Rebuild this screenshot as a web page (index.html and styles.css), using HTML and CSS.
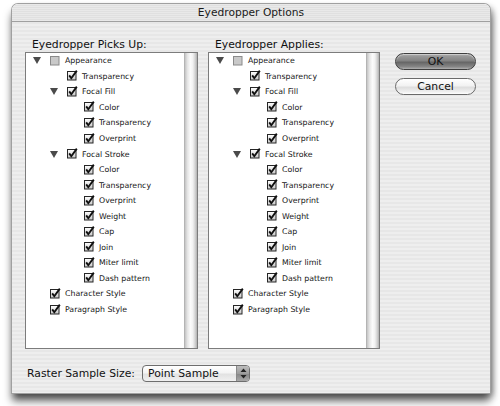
FILE: index.html
```html
<!DOCTYPE html>
<html>
<head>
<meta charset="utf-8">
<link rel="stylesheet" href="styles.css">
</head>
<body>
<svg width="0" height="0" class="defs">
  <defs>
    <linearGradient id="cbg" x1="0" y1="0" x2="0" y2="1">
      <stop offset="0" stop-color="#ffffff"/>
      <stop offset="1" stop-color="#c8c8c8"/>
    </linearGradient>
    <symbol id="chk" viewBox="0 0 11 11">
      <rect x="0.5" y="1.5" width="8.5" height="8.5" fill="url(#cbg)" stroke="#262626" stroke-width="1"/>
      <path d="M2.2 5.4 L4.3 8.2 L9.8 0.6" fill="none" stroke="#111" stroke-width="1.9" stroke-linejoin="miter"/>
    </symbol>
    <symbol id="unchk" viewBox="0 0 11 11">
      <rect x="0.5" y="1.5" width="8.5" height="8.5" fill="#c9c9c9" stroke="#8a8a8a" stroke-width="1"/>
    </symbol>
  </defs>
</svg>
<div class="window">
  <div class="titlebar">Eyedropper Options</div>
  <div class="content">
    <div class="main">
      <div class="col col1">
        <div class="label">Eyedropper Picks Up:</div>
        <div class="box">
          <div class="tree">
            <div class="row l0"><span class="tri"></span><svg class="cb"><use href="#unchk"/></svg><span>Appearance</span></div>
            <div class="row l1"><span class="slot"></span><svg class="cb"><use href="#chk"/></svg><span>Transparency</span></div>
            <div class="row l1"><span class="tri"></span><svg class="cb"><use href="#chk"/></svg><span>Focal Fill</span></div>
            <div class="row l2"><span class="slot"></span><svg class="cb"><use href="#chk"/></svg><span>Color</span></div>
            <div class="row l2"><span class="slot"></span><svg class="cb"><use href="#chk"/></svg><span>Transparency</span></div>
            <div class="row l2"><span class="slot"></span><svg class="cb"><use href="#chk"/></svg><span>Overprint</span></div>
            <div class="row l1"><span class="tri"></span><svg class="cb"><use href="#chk"/></svg><span>Focal Stroke</span></div>
            <div class="row l2"><span class="slot"></span><svg class="cb"><use href="#chk"/></svg><span>Color</span></div>
            <div class="row l2"><span class="slot"></span><svg class="cb"><use href="#chk"/></svg><span>Transparency</span></div>
            <div class="row l2"><span class="slot"></span><svg class="cb"><use href="#chk"/></svg><span>Overprint</span></div>
            <div class="row l2"><span class="slot"></span><svg class="cb"><use href="#chk"/></svg><span>Weight</span></div>
            <div class="row l2"><span class="slot"></span><svg class="cb"><use href="#chk"/></svg><span>Cap</span></div>
            <div class="row l2"><span class="slot"></span><svg class="cb"><use href="#chk"/></svg><span>Join</span></div>
            <div class="row l2"><span class="slot"></span><svg class="cb"><use href="#chk"/></svg><span>Miter limit</span></div>
            <div class="row l2"><span class="slot"></span><svg class="cb"><use href="#chk"/></svg><span>Dash pattern</span></div>
            <div class="row l0"><span class="slot"></span><svg class="cb"><use href="#chk"/></svg><span>Character Style</span></div>
            <div class="row l0"><span class="slot"></span><svg class="cb"><use href="#chk"/></svg><span>Paragraph Style</span></div>
          </div>
          <div class="scroll"></div>
        </div>
      </div>
      <div class="col col2">
        <div class="label">Eyedropper Applies:</div>
        <div class="box">
          <div class="tree">
            <div class="row l0"><span class="tri"></span><svg class="cb"><use href="#unchk"/></svg><span>Appearance</span></div>
            <div class="row l1"><span class="slot"></span><svg class="cb"><use href="#chk"/></svg><span>Transparency</span></div>
            <div class="row l1"><span class="tri"></span><svg class="cb"><use href="#chk"/></svg><span>Focal Fill</span></div>
            <div class="row l2"><span class="slot"></span><svg class="cb"><use href="#chk"/></svg><span>Color</span></div>
            <div class="row l2"><span class="slot"></span><svg class="cb"><use href="#chk"/></svg><span>Transparency</span></div>
            <div class="row l2"><span class="slot"></span><svg class="cb"><use href="#chk"/></svg><span>Overprint</span></div>
            <div class="row l1"><span class="tri"></span><svg class="cb"><use href="#chk"/></svg><span>Focal Stroke</span></div>
            <div class="row l2"><span class="slot"></span><svg class="cb"><use href="#chk"/></svg><span>Color</span></div>
            <div class="row l2"><span class="slot"></span><svg class="cb"><use href="#chk"/></svg><span>Transparency</span></div>
            <div class="row l2"><span class="slot"></span><svg class="cb"><use href="#chk"/></svg><span>Overprint</span></div>
            <div class="row l2"><span class="slot"></span><svg class="cb"><use href="#chk"/></svg><span>Weight</span></div>
            <div class="row l2"><span class="slot"></span><svg class="cb"><use href="#chk"/></svg><span>Cap</span></div>
            <div class="row l2"><span class="slot"></span><svg class="cb"><use href="#chk"/></svg><span>Join</span></div>
            <div class="row l2"><span class="slot"></span><svg class="cb"><use href="#chk"/></svg><span>Miter limit</span></div>
            <div class="row l2"><span class="slot"></span><svg class="cb"><use href="#chk"/></svg><span>Dash pattern</span></div>
            <div class="row l0"><span class="slot"></span><svg class="cb"><use href="#chk"/></svg><span>Character Style</span></div>
            <div class="row l0"><span class="slot"></span><svg class="cb"><use href="#chk"/></svg><span>Paragraph Style</span></div>
          </div>
          <div class="scroll"></div>
        </div>
      </div>
      <div class="buttons">
        <div class="btn ok">OK</div>
        <div class="btn cancel">Cancel</div>
      </div>
    </div>
    <div class="bottom">
      <span class="blabel">Raster Sample Size:</span>
      <div class="popup">
        <span class="ptext">Point Sample</span>
        <span class="parrows">
          <svg width="7" height="11" viewBox="0 0 7 11"><path d="M3.5 0.5 L6.5 4 L0.5 4 Z M0.5 7 L6.5 7 L3.5 10.5 Z" fill="#222"/></svg>
        </span>
      </div>
    </div>
  </div>
</div>
</body>
</html>
```
FILE: styles.css
```css
* { box-sizing: border-box; }
html, body { margin: 0; padding: 0; }
body {
  width: 500px;
  height: 406px;
  overflow: hidden;
  background: #ffffff;
  font-family: "DejaVu Sans", "Liberation Sans", sans-serif;
  color: #111;
}
.defs { position: absolute; width: 0; height: 0; }
.window {
  margin: 4px 0 0 12px;
  width: 478px;
  height: 389px;
  border-radius: 6px 6px 0 0;
  background: repeating-linear-gradient(to bottom, #eeeeee 0, #eeeeee 2px, #e7e7e7 2px, #e7e7e7 4px);
  box-shadow: 0 0 0 1px #a0a0a0, 0 8px 8px rgba(0,0,0,0.6), 3px 3px 6px rgba(0,0,0,0.35);
  display: flex;
  flex-direction: column;
  overflow: hidden;
}
.titlebar {
  height: 18px;
  line-height: 17px;
  text-align: center;
  font-size: 10.7px;
  color: #1a1a1a;
  background: repeating-linear-gradient(to bottom, #e9e9e9 0, #e9e9e9 1px, #e0e0e0 1px, #e0e0e0 2px);
  border-bottom: 1px solid #a0a0a0;
  border-radius: 6px 6px 0 0;
}
.content {
  padding: 15px 0 0 13px;
  display: flex;
  flex-direction: column;
}
.main {
  display: flex;
  gap: 10px;
}
.col1 { width: 173px; }
.col2 { width: 172px; }
.label {
  height: 15px;
  line-height: 15px;
  font-size: 10.8px;
  padding-left: 7px;
  color: #111;
  white-space: nowrap;
}
.box {
  height: 297px;
  border: 1px solid #7c7c7c;
  background: #fff;
  display: flex;
}
.tree {
  flex: 1;
  padding-top: 0;
}
.scroll {
  width: 13px;
  border-left: 1px solid #b4b4b4;
  background: linear-gradient(to right, #c4c4c4 0%, #e4e4e4 20%, #fbfbfb 45%, #f2f2f2 65%, #d2d2d2 85%, #b0b0b0 100%);
}
.row {
  height: 15.55px;
  display: flex;
  align-items: center;
  font-size: 7.8px;
  white-space: nowrap;
  color: #151515;
}
.row.l0 { padding-left: 7px; }
.row.l1 { padding-left: 24px; }
.row.l2 { padding-left: 41px; }
.slot, .tri { width: 17px; flex: none; }
.tri {
  height: 7px;
  position: relative;
}
.tri::before {
  content: "";
  position: absolute;
  left: 0;
  top: 0;
  border-left: 4px solid transparent;
  border-right: 4px solid transparent;
  border-top: 7px solid #4a4a4a;
}
.cb {
  width: 11px;
  height: 11px;
  flex: none;
  margin-right: 4px;
  margin-top: -1px;
}
.buttons {
  margin-left: 5px;
  padding-top: 16px;
  display: flex;
  flex-direction: column;
  gap: 8px;
  width: 81px;
}
.btn {
  height: 17px;
  border-radius: 9px;
  text-align: center;
  font-size: 10.8px;
  line-height: 15px;
  color: #111;
}
.ok {
  border: 1px solid #3e3e3e;
  background: linear-gradient(to bottom, #a3a3a3 0%, #838383 45%, #666666 55%, #868686 85%, #b0b0b0 100%);
  box-shadow: inset 0 1px 1px rgba(255,255,255,0.5);
}
.cancel {
  border: 1px solid #6a6a6a;
  background: linear-gradient(to bottom, #ffffff 0%, #f2f2f2 45%, #dedede 55%, #efefef 85%, #ffffff 100%);
}
.bottom {
  margin-top: 16px;
  display: flex;
  align-items: center;
  padding-left: 2px;
  height: 17px;
}
.blabel {
  font-size: 10.8px;
  width: 115px;
  white-space: nowrap;
}
.popup {
  width: 108px;
  height: 17px;
  border: 1px solid #6e6e6e;
  border-radius: 4px;
  display: flex;
  background: linear-gradient(to bottom, #ffffff 0%, #f4f4f4 45%, #e2e2e2 55%, #f0f0f0 100%);
  overflow: hidden;
}
.ptext {
  flex: 1;
  font-size: 10.8px;
  line-height: 15px;
  padding-left: 5px;
}
.parrows {
  width: 13px;
  display: flex;
  align-items: center;
  justify-content: center;
  border-left: 1px solid #8a8a8a;
  background: linear-gradient(to bottom, #bdbdbd 0%, #9c9c9c 50%, #888 55%, #a8a8a8 100%);
}
```
